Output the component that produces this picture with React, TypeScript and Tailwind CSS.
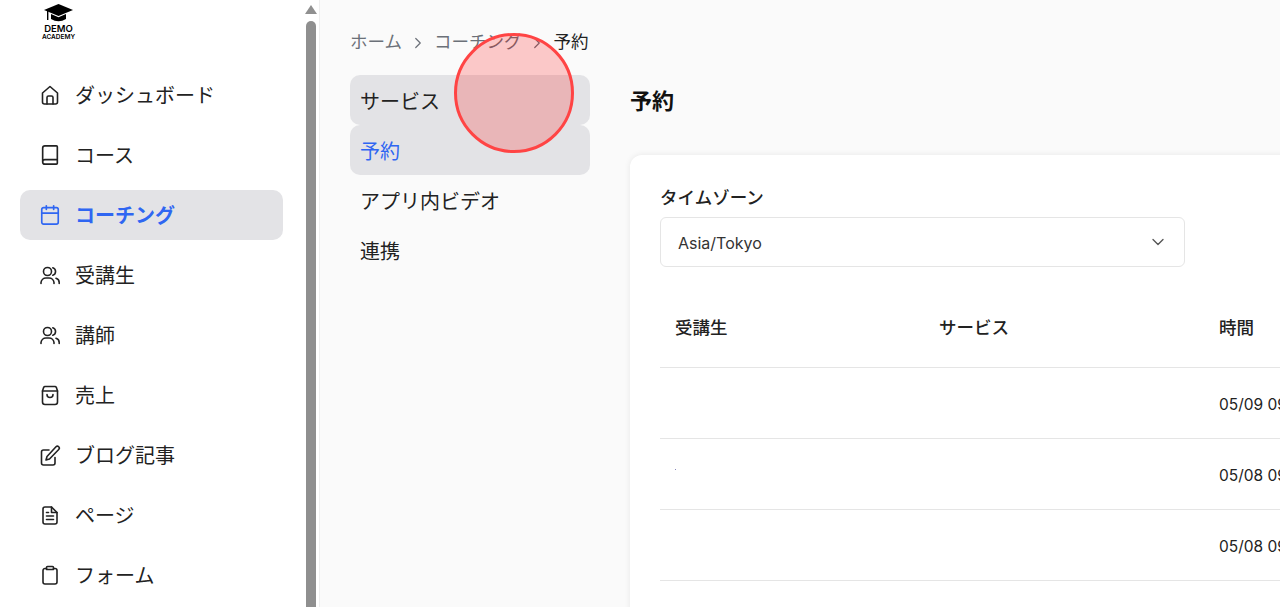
import { Book, Calendar, ChevronDown, ChevronRight } from 'lucide-react'
import type { ReactNode } from 'react'

function Glyph({ children }: { children: ReactNode }) {
  return (
    <svg viewBox="0 0 20 20" className="h-5 w-5 shrink-0 overflow-visible" fill="none" stroke="currentColor" strokeWidth={1.6} strokeLinecap="round" strokeLinejoin="round">
      {children}
    </svg>
  )
}

const HomeIcon = () => (
  <Glyph>
    <path d="M2.5 8 L10 1.5 L17.5 8 V17 a2 2 0 0 1 -2 2 H4.5 a2 2 0 0 1 -2 -2 Z" />
    <path d="M7 19 V12.5 a1.5 1.5 0 0 1 1.5 -1.5 h3 a1.5 1.5 0 0 1 1.5 1.5 V19" />
  </Glyph>
)
const BookIcon = () => <Book className="h-[22px] w-[22px] shrink-0" strokeWidth={1.8} />
const CalendarIcon = () => <Calendar className="h-[22px] w-[22px] shrink-0" strokeWidth={1.8} />
const UsersIcon = () => (
  <Glyph>
    <circle cx="7.5" cy="6.5" r="4" />
    <path d="M12.8 2.7 a4 4 0 0 1 0 7.6" />
    <path d="M1 18.5 v-1 a5 5 0 0 1 5 -4.5 h3 a5 5 0 0 1 5 4.5 v1" />
    <path d="M16 13.2 a4.5 4.5 0 0 1 3.2 4.3 v1" />
  </Glyph>
)
const BagIcon = () => (
  <Glyph>
    <path d="M5 1.5 h10 a1.5 1.5 0 0 1 1.3 .8 L17.5 6 V17 a2.5 2.5 0 0 1 -2.5 2.5 H5 a2.5 2.5 0 0 1 -2.5 -2.5 V6 L3.7 2.3 a1.5 1.5 0 0 1 1.3 -.8 Z" />
    <path d="M2.5 6 h15" />
    <path d="M13 9.5 a3 3 0 0 1 -6 0" />
  </Glyph>
)
const PenIcon = () => (
  <Glyph>
    <path d="M9 5 H3.5 a2 2 0 0 0 -2 2 V18 a2 2 0 0 0 2 2 H13 a2 2 0 0 0 2 -2 V12.5" />
    <path d="M16 1.8 a1.9 1.9 0 0 1 2.7 2.7 L9.5 14 L6 15 L7 11.5 Z" />
  </Glyph>
)
const FileIcon = () => (
  <Glyph>
    <path d="M5 2 H11.5 L17 7.5 V17 a2 2 0 0 1 -2 2 H5 a2 2 0 0 1 -2 -2 V4 a2 2 0 0 1 2 -2 Z" />
    <path d="M11.5 2 V7.5 H17" />
    <path d="M6.5 11 h7 M6.5 14.5 h7 M6.5 7.5 h2" />
  </Glyph>
)
const ClipboardIcon = () => (
  <Glyph>
    <path d="M6.5 3.5 H5 a2 2 0 0 0 -2 2 V17 a2 2 0 0 0 2 2 H15 a2 2 0 0 0 2 -2 V5.5 a2 2 0 0 0 -2 -2 H13.5" />
    <path d="M7.5 1.5 h5 a1 1 0 0 1 1 1 V4.5 H6.5 V2.5 a1 1 0 0 1 1 -1 Z" />
  </Glyph>
)

const navItems = [
  { icon: HomeIcon, label: 'ダッシュボード' },
  { icon: BookIcon, label: 'コース' },
  { icon: CalendarIcon, label: 'コーチング', active: true },
  { icon: UsersIcon, label: '受講生' },
  { icon: UsersIcon, label: '講師' },
  { icon: BagIcon, label: '売上' },
  { icon: PenIcon, label: 'ブログ記事' },
  { icon: FileIcon, label: 'ページ' },
  { icon: ClipboardIcon, label: 'フォーム' },
]

const subItems = ['サービス', '予約', 'アプリ内ビデオ', '連携']
const rows = ['05/09 09:00', '05/08 09:00', '05/08 09:00']

function Logo() {
  return (
    <div className="flex w-[35px] flex-col items-center text-black">
      <svg viewBox="0 0 29 18" className="h-[18px] w-[29px]" fill="currentColor">
        <path d="M14.5 0 L29 6 L14.5 12 L0 6 Z" />
        <path d="M7 10 L14.5 13.2 L22 10 V15 Q14.5 19.5 7 15 Z" />
        <rect x="3" y="7" width="1.4" height="9" />
      </svg>
      <span className="mt-[3px] text-[9.5px] leading-[8px] font-semibold">DEMO</span>
      <span className="mt-[1px] text-[6.5px] leading-[7px] font-semibold">ACADEMY</span>
    </div>
  )
}

function Sidebar() {
  return (
    <aside className="flex h-full w-[320px] shrink-0 border-r border-[#eeeeee] bg-white">
      <div className="w-[305px] shrink-0 pt-[4px] pr-[22px] pl-5">
        <div className="h-[36px] pl-[21px]">
          <Logo />
        </div>
        <nav className="mt-[30px] flex flex-col gap-[10px]">
          {navItems.map((item) => {
            const Icon = item.icon
            return (
              <div
                key={item.label}
                className={`flex h-[50px] items-center rounded-[10px] pl-[20px] text-[20px] ${
                  item.active ? 'bg-[#e3e3e6] font-bold text-[#2f66f2]' : 'text-[#222222]'
                }`}
              >
                <span className="flex w-[20px] shrink-0 justify-center">
                  <Icon />
                </span>
                <span className="ml-[15px] pt-[2px]">{item.label}</span>
              </div>
            )
          })}
        </nav>
      </div>
      <div className="flex w-[12px] flex-col items-center">
        <div className="mt-[5px] h-0 w-0 border-x-[6px] border-b-[9px] border-x-transparent border-b-[#909090]" />
        <div className="mt-[7px] w-[10px] flex-1 rounded-t-[5px] bg-[#8f8f8f]" />
      </div>
    </aside>
  )
}

export default function App() {
  return (
    <div className="relative flex h-[607px] w-[1280px] overflow-hidden bg-[#fafafa] font-['Inter','Noto_Sans_CJK_JP',sans-serif] text-[#222222]">
      <Sidebar />

      <main className="min-w-0 flex-1 pt-[30px] pl-[30px]">
        <div className="flex h-[25px] items-center text-[17.5px] text-[#6b7078]">
          <span>ホーム</span>
          <ChevronRight className="mx-[7px] h-[18px] w-[18px]" strokeWidth={1.6} />
          <span>コーチング</span>
          <ChevronRight className="mx-[7px] h-[18px] w-[18px]" strokeWidth={1.6} />
          <span className="text-[#222222]">予約</span>
        </div>

        <div className="mt-[20px] flex">
          <div className="flex w-[240px] shrink-0 flex-col">
            {subItems.map((label, i) => (
              <div
                key={label}
                className={`flex h-[50px] items-center rounded-[10px] px-[10px] pt-[4px] text-[20px] ${
                  i < 2 ? 'bg-[#e3e3e6]' : ''
                } ${i === 1 ? 'text-[#2f66f2]' : ''}`}
              >
                {label}
              </div>
            ))}
          </div>

          <div className="ml-[40px] w-[700px] shrink-0">
            <h1 className="flex h-[50px] items-center pt-[2px] text-[22px] font-bold text-[#111111]">予約</h1>
            <section className="mt-[30px] h-[500px] rounded-[12px] bg-white px-[30px] pt-[30px] shadow-[0_0_6px_rgba(0,0,0,0.08)]">
              <label className="block text-[17.5px] leading-[26px] font-medium">タイムゾーン</label>
              <div className="mt-[6px] flex h-[50px] w-[525px] items-center justify-between rounded-[6px] border border-[#e5e5e5] pr-[16px] pl-[17px] text-[16px] text-[#333333]">
                <span className="pt-[1px]">Asia/Tokyo</span>
                <ChevronDown className="h-[20px] w-[20px] text-[#555555]" strokeWidth={1.6} />
              </div>

              <div className="mt-[30px] grid h-[71px] grid-cols-[264px_280px_1fr] items-center border-b border-[#e5e5e5] pb-[8px] pl-[15px] text-[17.5px] font-medium">
                <span>受講生</span>
                <span>サービス</span>
                <span>時間</span>
              </div>
              {rows.map((time, i) => (
                <div
                  key={i}
                  className="relative grid h-[71px] grid-cols-[264px_280px_1fr] items-center border-b border-[#e5e5e5] pt-[4px] pl-[15px] text-[15.5px] whitespace-nowrap"
                >
                  <span />
                  <span />
                  <span>{time}</span>
                  {i === 1 && <span className="absolute top-[30px] left-[15px] h-px w-px bg-[#8888bb]" />}
                </div>
              ))}
            </section>
          </div>
        </div>
      </main>

      {/* click marker */}
      <div className="absolute top-[33px] left-[454px] h-[120px] w-[120px] rounded-full border-[3.5px] border-[#ff4444] bg-[#ff0000]/20" />
    </div>
  )
}
